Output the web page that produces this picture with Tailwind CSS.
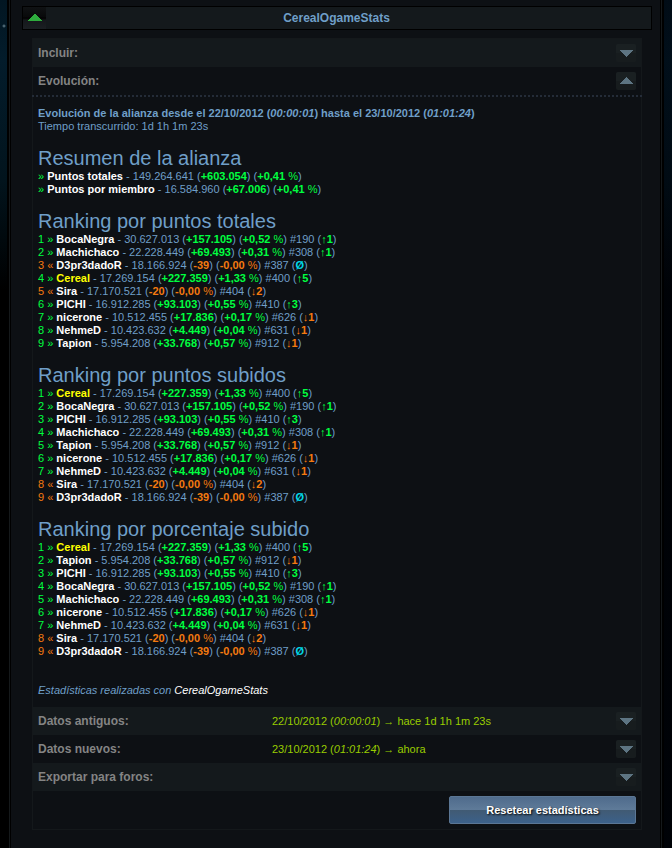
<!DOCTYPE html>
<html lang="es">
<head>
<meta charset="utf-8">
<title>CerealOgameStats</title>
<script src="https://cdn.jsdelivr.net/npm/@tailwindcss/browser@4"></script>
</head>
<body class="bg-black font-['Liberation_Sans',Arial,sans-serif] text-[11px] leading-[13px] text-[#6f9fc8]">
<div class="min-h-screen bg-[radial-gradient(circle_at_4px_26px,#6f8591_0px,#3a5563_1px,transparent_2px),linear-gradient(to_right,transparent_50%,rgba(0,4,12,0.55)_50%),linear-gradient(to_bottom,#021622_0px,#031c2b_60px,#02141d_180px,#000_290px)] pl-[7px] pr-2">
  <div class="min-h-screen border-x-2 border-black bg-[#0d1014]">
    <div class="min-h-screen border-x border-[#15191b]">
      <main class="min-h-screen border-x border-black px-[11px] pt-[6px] pr-2">
        <header class="flex h-6 items-stretch border border-black bg-[#14191c]">
          <button type="button" aria-label="Contraer" class="w-[23px] bg-[linear-gradient(to_bottom,#101214_0px,#08090a_10px,#000_11px,#15181b_13px,#1b1f23_22px)]">
            <svg width="23" height="22" viewBox="0 0 23 22" shape-rendering="crispEdges"><path d="M11 7h1l7 7H5z" fill="#2eac3d"/></svg>
          </button>
          <h1 class="flex-1 pr-6 text-center text-xs leading-[22px] font-bold">CerealOgameStats</h1>
        </header>
        <section id="panel" class="mt-2 mr-[10px] ml-[10px] border border-[#14181b]"></section>
      </main>
    </div>
  </div>
</div>
<script>
const players = {
  BocaNegra: ['30.627.013', '+157.105', '+0,52', 190, '↑1'],
  Machichaco: ['22.228.449', '+69.493', '+0,31', 308, '↑1'],
  D3pr3dadoR: ['18.166.924', '-39', '-0,00', 387, 'Ø'],
  Cereal: ['17.269.154', '+227.359', '+1,33', 400, '↑5'],
  Sira: ['17.170.521', '-20', '-0,00', 404, '↓2'],
  PICHI: ['16.912.285', '+93.103', '+0,55', 410, '↑3'],
  nicerone: ['10.512.455', '+17.836', '+0,17', 626, '↓1'],
  NehmeD: ['10.423.632', '+4.449', '+0,04', 631, '↓1'],
  Tapion: ['5.954.208', '+33.768', '+0,57', 912, '↓1']
};
const rankings = [
  ['Ranking por puntos totales', 'BocaNegra Machichaco D3pr3dadoR Cereal Sira PICHI nicerone NehmeD Tapion'],
  ['Ranking por puntos subidos', 'Cereal BocaNegra PICHI Machichaco Tapion nicerone NehmeD Sira D3pr3dadoR'],
  ['Ranking por porcentaje subido', 'Cereal Tapion PICHI BocaNegra Machichaco nicerone NehmeD Sira D3pr3dadoR']
];
const tone = v => v[0] === '-' ? 'text-[#f47a10]' : 'text-[#00ff40]';
const moveTone = v => ({ '↑': 'text-[#00ff40]', '↓': 'text-[#f47a10]', 'Ø': 'text-[#00d8e8]' })[v[0]];
const moveText = v => v === 'Ø' ? '<b>Ø</b>' : `${v[0]}<b>${v.slice(1)}</b>`;
const change = (diff, pct) => `(<b class="${tone(diff)}">${diff}</b>) (<span class="${tone(diff)}"><b>${pct}</b> %</span>)`;
const heading = t => `<h2 class="text-xl leading-6">${t}</h2>`;
const playerLine = (name, i) => {
  const [points, diff, pct, rank, move] = players[name];
  const color = name === 'Cereal' ? 'text-[#ffff00]' : 'text-white';
  return `<li><span class="${tone(diff)}">${i + 1} ${diff[0] === '-' ? '«' : '»'}</span> <b class="${color}">${name}</b> - ${points} ${change(diff, pct)} #${rank} (<span class="${moveTone(move)}">${moveText(move)}</span>)</li>`;
};
const totalLine = (name, points, diff, pct) =>
  `<li><span class="text-[#00ff40]">»</span> <b class="text-white">${name}</b> - ${points} ${change(diff, pct)}</li>`;
const row = (label, shade, open, info = '') => `
  <div class="flex h-7 items-center px-[5px] ${shade ? 'bg-[#14191c]' : ''}">
    <h2 class="w-[234px] text-xs leading-7 font-bold text-[#848484]">${label}</h2>
    <p class="flex-1 text-[#99cc00]">${info}</p>
    <button type="button" aria-label="${open ? 'Contraer' : 'Expandir'} ${label}" aria-expanded="${open}" class="h-[18px] w-5 rounded-xs bg-[linear-gradient(to_bottom,#1a2022_50%,#171c1e_50%)]">
      <svg width="20" height="18" viewBox="0 0 20 18" shape-rendering="crispEdges"><path d="${open ? 'M10 5h1l6 7H4z' : 'M4 6h13l-6 7h-1z'}" fill="#5d7482"/></svg>
    </button>
  </div>`;
document.getElementById('panel').innerHTML = `
  ${row('Incluir:', true, false)}
  ${row('Evolución:', false, true)}
  <div class="-mx-px h-[2px] bg-[repeating-linear-gradient(to_right,#242c38_0px,#242c38_2px,transparent_2px,transparent_4px)]"></div>
  <article class="px-[5px] py-[10px]">
    <p class="font-bold">Evolución de la alianza desde el 22/10/2012 (<i>00:00:01</i>) hasta el 23/10/2012 (<i>01:01:24</i>)</p>
    <p class="mb-[13px]">Tiempo transcurrido: 1d 1h 1m 23s</p>
    ${heading('Resumen de la alianza')}
    <ul class="mb-[13px]">${totalLine('Puntos totales', '149.264.641', '+603.054', '+0,41')}${totalLine('Puntos por miembro', '16.584.960', '+67.006', '+0,41')}</ul>
    ${rankings.map(([title, names]) => `${heading(title)}<ol class="mb-[13px]">${names.split(' ').map(playerLine).join('')}</ol>`).join('')}
    <p class="pt-[13px] italic">Estadísticas realizadas con <a href="#" class="text-white">CerealOgameStats</a></p>
  </article>
  ${row('Datos antiguos:', true, false, '22/10/2012 (<i>00:00:01</i>) → hace 1d 1h 1m 23s')}
  ${row('Datos nuevos:', false, false, '23/10/2012 (<i>01:01:24</i>) → ahora')}
  ${row('Exportar para foros:', true, false)}
  <div class="flex justify-end px-[5px] py-[5px]">
    <button type="button" class="h-7 w-[187px] rounded-xs border border-[#5b7694] bg-[linear-gradient(to_bottom,#4f6b8c_0%,#5f7b99_50%,#415a73_50%,#3c618a_100%)] font-bold text-white [text-shadow:1px_1px_2px_#000]">Resetear estadísticas</button>
  </div>`;
</script>
</body>
</html>
